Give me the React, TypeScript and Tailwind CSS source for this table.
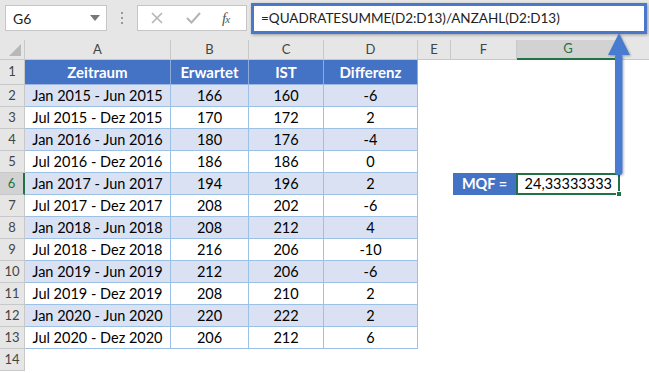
import React from 'react';

const rows = [
  ['Jan 2015 - Jun 2015', 166, 160, -6],
  ['Jul 2015 - Dez 2015', 170, 172, 2],
  ['Jan 2016 - Jun 2016', 180, 176, -4],
  ['Jul 2016 - Dez 2016', 186, 186, 0],
  ['Jan 2017 - Jun 2017', 194, 196, 2],
  ['Jul 2017 - Dez 2017', 208, 202, -6],
  ['Jan 2018 - Jun 2018', 208, 212, 4],
  ['Jul 2018 - Dez 2018', 216, 206, -10],
  ['Jan 2019 - Jun 2019', 212, 206, -6],
  ['Jul 2019 - Dez 2019', 208, 210, 2],
  ['Jan 2020 - Jun 2020', 220, 222, 2],
  ['Jul 2020 - Dez 2020', 206, 212, 6],
];

const cols = [
  { key: 'A', w: 'w-[146px]' },
  { key: 'B', w: 'w-[78px]' },
  { key: 'C', w: 'w-[75px]' },
  { key: 'D', w: 'w-[94px]' },
  { key: 'E', w: 'w-[33px]' },
  { key: 'F', w: 'w-[66px]' },
  { key: 'G', w: 'w-[103px]' },
];

function RowHead({ n, active, h }: { n: number; active?: boolean; h: string }) {
  return (
    <div
      className={`w-[25px] shrink-0 ${h} flex items-center justify-center border-b border-r border-[#c8c8c8] text-[13px] ${
        active ? 'bg-[#d2d2d2] text-[#217346] border-r-2 border-r-[#217346]' : 'bg-[#e6e6e6] text-[#444]'
      }`}
    >
      {n}
    </div>
  );
}

function Toolbar() {
  return (
    <div className="h-[40px] bg-[#e6e6e6] flex items-start pt-[5px] pl-[5px] relative">
      <div className="w-[102px] h-[26px] bg-white border border-[#c6c6c6] flex items-center justify-between pl-[7px] pr-[6px] text-[14px] text-[#222]">
        <span>G6</span>
        <svg width="10" height="6" viewBox="0 0 10 6">
          <path d="M0 0h10L5 6z" fill="#777" />
        </svg>
      </div>
      <div className="w-[30px] h-[26px] flex flex-col items-center justify-center gap-[3px]">
        <span className="w-[2px] h-[2px] bg-[#999]" />
        <span className="w-[2px] h-[2px] bg-[#999]" />
        <span className="w-[2px] h-[2px] bg-[#999]" />
      </div>
      <div className="w-[110px] h-[26px] bg-white border border-[#c6c6c6] flex items-center pl-[13px]">
        <svg width="12" height="12" viewBox="0 0 12 12">
          <path d="M1 1l10 10M11 1L1 11" stroke="#b4b4b4" strokeWidth="1.6" />
        </svg>
        <svg className="ml-[23px]" width="15" height="12" viewBox="0 0 15 12">
          <path d="M1 6l4.5 4.5L14 1" stroke="#b4b4b4" strokeWidth="2" fill="none" />
        </svg>
        <span className="ml-[21px] italic text-[15px] text-[#555] font-['Liberation_Serif',serif] tracking-[-1px]">
          f<span className="text-[11px]">x</span>
        </span>
      </div>
      <div className="ml-[4px] mt-[-2px] w-[396px] h-[31px] bg-white border-[3px] border-[#4a78c8] shadow-[1px_1px_3px_rgba(0,0,0,0.3)] flex items-center pl-[7px] text-[13.5px] text-[#222]">
        =QUADRATESUMME(D2:D13)/ANZAHL(D2:D13)
      </div>
    </div>
  );
}

export default function App() {
  return (
    <div className="w-[649px] h-[373px] overflow-hidden bg-white relative font-['Lato',sans-serif] text-black">
      <Toolbar />

      {/* column letters */}
      <div className="flex h-[20px]">
        <div className="w-[25px] shrink-0 bg-[#e6e6e6] border-r border-b border-[#c8c8c8] relative">
          <svg className="absolute right-[3px] bottom-[3px]" width="12" height="12" viewBox="0 0 12 12">
            <path d="M12 0v12H0z" fill="#b8b8b8" />
          </svg>
        </div>
        {cols.map((c) => (
          <div
            key={c.key}
            className={`${c.w} shrink-0 flex items-center justify-center text-[13px] border-r border-[#c8c8c8] ${
              c.key === 'G'
                ? 'bg-[#d2d2d2] text-[#217346] border-b-2 border-b-[#217346]'
                : 'bg-[#e6e6e6] text-[#444] border-b border-b-[#c8c8c8]'
            }`}
          >
            {c.key}
          </div>
        ))}
        <div className="flex-1 bg-[#e6e6e6] border-b border-[#c8c8c8]" />
      </div>

      {/* header row */}
      <div className="flex">
        <RowHead n={1} h="h-[25px]" />
        <div className="flex h-[25px] bg-[#4472c4] text-white font-bold text-[15px] border-b border-[#9bb7e4]">
          <div className="w-[146px] flex items-center justify-center border-r border-[#8eaadb]">Zeitraum</div>
          <div className="w-[78px] flex items-center justify-center border-r border-[#8eaadb]">Erwartet</div>
          <div className="w-[75px] flex items-center justify-center border-r border-[#8eaadb]">IST</div>
          <div className="w-[94px] flex items-center justify-center border-r border-[#8eaadb]">Differenz</div>
        </div>
      </div>

      {rows.map((r, i) => {
        const n = i + 2;
        const bg = i % 2 === 0 ? 'bg-[#d9e1f2]' : 'bg-white';
        return (
          <div key={n} className="flex">
            <RowHead n={n} h="h-[22px]" active={n === 6} />
            <div className={`flex h-[22px] ${bg} text-[14.5px] border-b border-[#9bc2e6]`}>
              <div className="w-[146px] flex items-center justify-center border-r border-[#9bc2e6]">{r[0]}</div>
              <div className="w-[78px] flex items-center justify-center border-r border-[#9bc2e6]">{r[1]}</div>
              <div className="w-[75px] flex items-center justify-center border-r border-[#9bc2e6]">{r[2]}</div>
              <div className="w-[94px] flex items-center justify-center border-r border-[#9bc2e6]">{r[3]}</div>
            </div>
            {n === 6 && (
              <div className="flex h-[22px] ml-[35px] text-[14.5px]">
                <div className="w-[63px] bg-[#4472c4] text-white font-bold flex items-center justify-center">MQF =</div>
                <div className="w-[104px] border-2 border-[#217346] flex items-center justify-end pr-[6px] relative">
                  24,33333333
                  <span className="absolute right-[-4px] bottom-[-4px] w-[6px] h-[6px] bg-[#217346] border border-white" />
                </div>
              </div>
            )}
          </div>
        );
      })}
      <div className="flex">
        <RowHead n={14} h="h-[22px]" />
      </div>

      {/* arrow from formula bar down to the result cell */}
      <svg className="absolute left-[604px] top-[31px]" width="30" height="148" viewBox="0 0 30 148">
        <defs>
          <filter id="sh" x="-50%" y="-10%" width="200%" height="120%">
            <feDropShadow dx="1" dy="1" stdDeviation="1" floodOpacity="0.3" />
          </filter>
        </defs>
        <g filter="url(#sh)" fill="#4a7bd0">
          <path d="M15 2L26 24H4z" />
          <rect x="11" y="23" width="7.5" height="121" rx="3" />
        </g>
      </svg>
    </div>
  );
}
